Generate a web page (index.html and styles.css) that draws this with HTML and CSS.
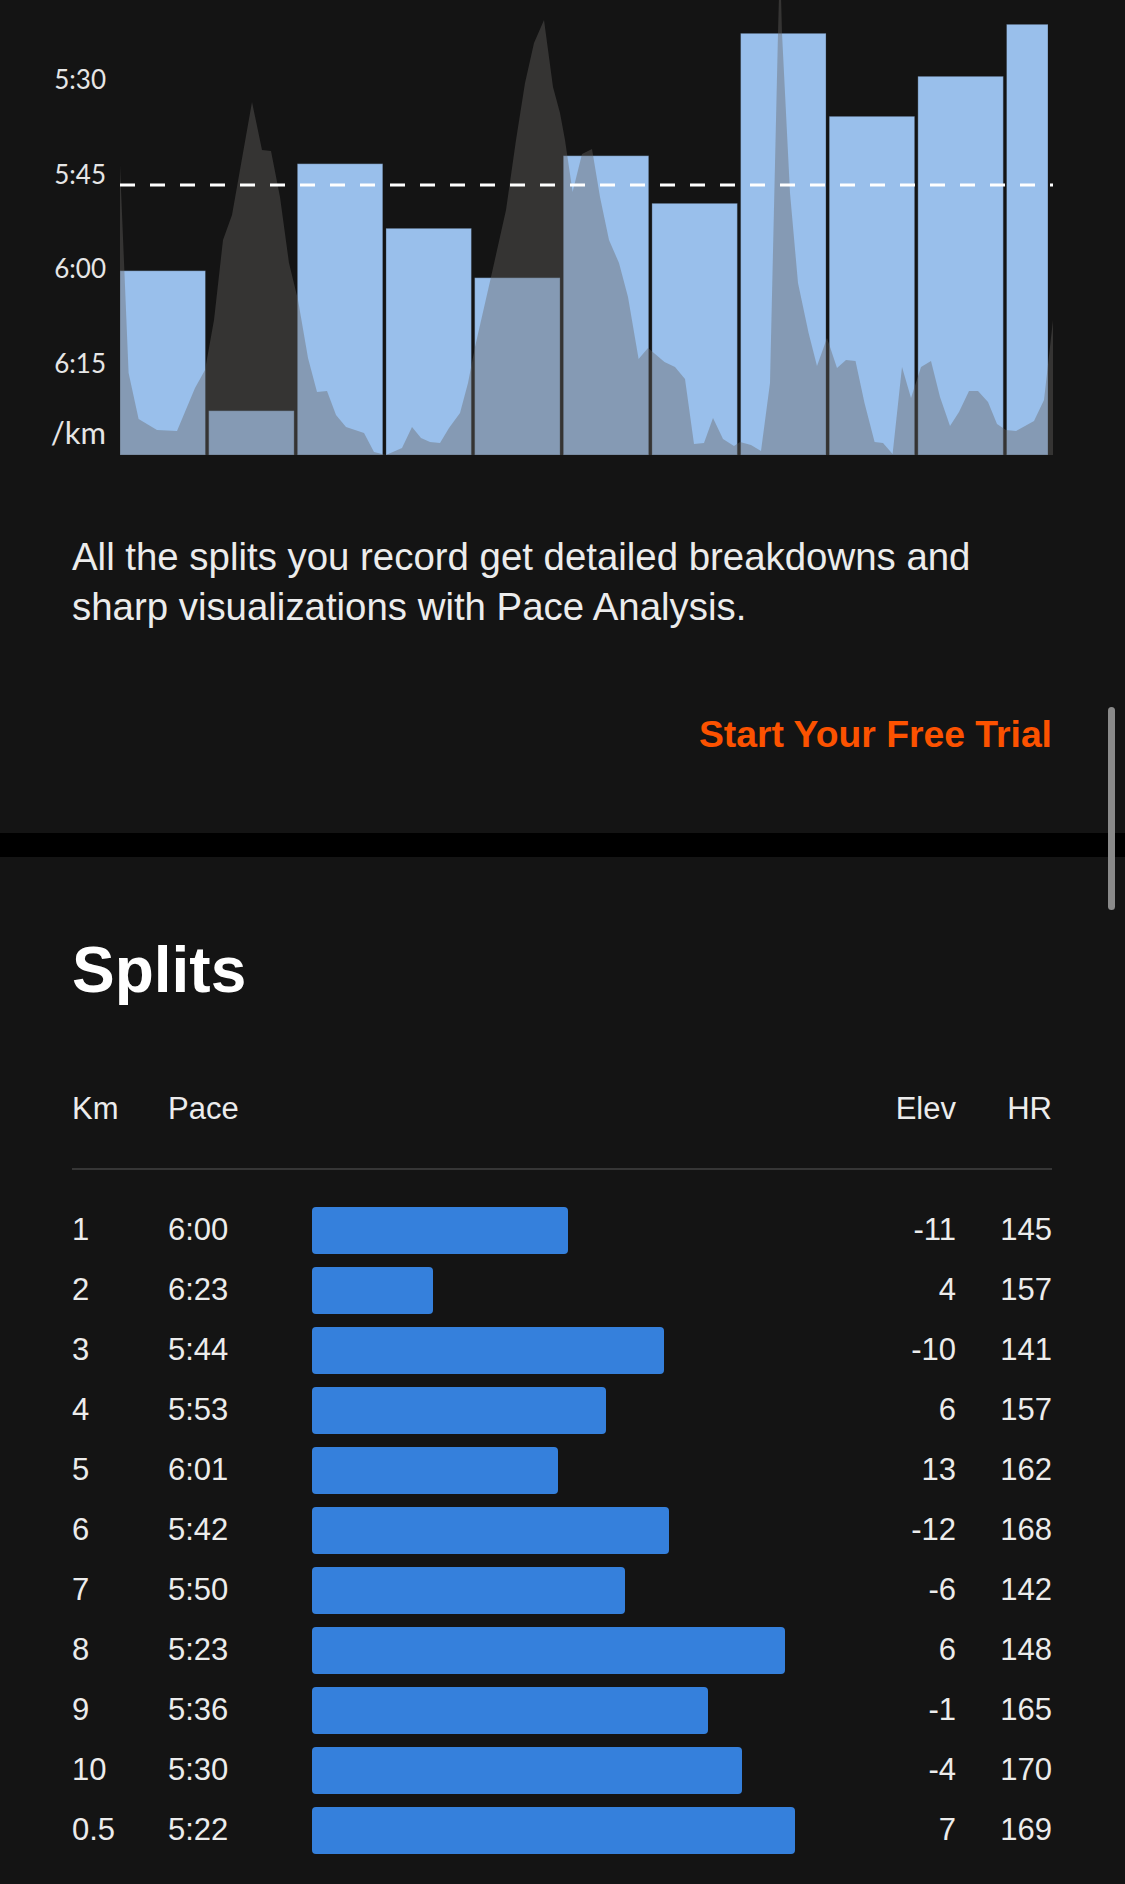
FILE: index.html
```html
<!DOCTYPE html>
<html lang="en">
<head>
    <meta charset="UTF-8">
    <meta name="viewport" content="width=device-width, initial-scale=1.0">
    <title>Pace Analysis</title>
    <link rel="stylesheet" href="styles.css">
</head>
<body>

    <section class="pace">
        <svg class="pace-chart" width="1060" height="460" viewBox="0 0 1060 460">
            <text class="axis-label" x="106" y="89">5:30</text>
            <text class="axis-label" x="106" y="184">5:45</text>
            <text class="axis-label" x="106" y="278">6:00</text>
            <text class="axis-label" x="106" y="373">6:15</text>
            <text class="axis-label axis-unit" x="106" y="444">/km</text>

            <!-- one bar per km, top = pace -->
            <g class="pace-bars">
                <rect x="120" y="270.7" width="85.5" height="184.3"/>
                <rect x="208.65" y="410.7" width="85.5" height="44.3"/>
                <rect x="297.3" y="163.7" width="85.5" height="291.3"/>
                <rect x="385.95" y="228.3" width="85.5" height="226.7"/>
                <rect x="474.6" y="277.7" width="85.5" height="177.3"/>
                <rect x="563.25" y="155.7" width="85.5" height="299.3"/>
                <rect x="651.9" y="203.3" width="85.5" height="251.7"/>
                <rect x="740.55" y="33.3" width="85.5" height="421.7"/>
                <rect x="829.2" y="116.3" width="85.5" height="338.7"/>
                <rect x="917.85" y="76.3" width="85.5" height="378.7"/>
                <rect x="1006.5" y="24.3" width="41.5" height="430.7"/>
            </g>

            <!-- elevation profile -->
            <polygon class="elevation" points="120,455 120,165 128.6,373 138.6,419 157,430 177,431 195,388 205,370 214,320 223,240 232,215 252,102 262,150 271,151 280,197 289,263 298,300 308,358 317,392 327,391 336,415 346,427 364,433 374,452 382,454 386,455 402,448 412,427 421,438 430,442 440,443 449,428 460,413 468,383 475,347 491,277 506,210 516,140 525,83 534,43 544,20 553,87 560,113 565,140 572.6,192 582,154 592,149 600,197 609,240 619,263 628,297 638.6,359 648,348 664.5,362 675,367 685,379 694,444 704,443 713,418 723,439 734,446 740,442 751,445 761,451 770,383 778,33 779,-5 781,-5 782,33 790,193 798,283 808.6,333 817,366 827,338 837,368 846,360 855.5,361 864.5,403 874.6,442 883,443 892.6,454 902,367 911,398 921,367 931,361 940,397 950,426 959,412 969,391 978,391 988,402 997,424 1006,430 1016,431 1034,421 1044,400 1053,320 1053,455"/>

            <!-- average pace -->
            <line class="avg-line" x1="120" y1="185" x2="1053" y2="185"/>
        </svg>

        <div class="pace-body">
            <p class="pace-copy">All the splits you record get detailed breakdowns and sharp visualizations with Pace Analysis.</p>
            <div class="cta-row">
                <a class="cta" href="#">Start Your Free Trial</a>
            </div>
        </div>
    </section>

    <div class="band"></div>

    <section class="splits">
        <h2 class="splits-title">Splits</h2>

        <div class="split-row split-head">
            <span>Km</span>
            <span>Pace</span>
            <span></span>
            <span class="num">Elev</span>
            <span class="num">HR</span>
        </div>

        <div class="split-list">
            <div class="split-row split">
                <span>1</span><span>6:00</span>
                <span><div class="bar" style="width: 256px"></div></span>
                <span class="num">-11</span><span class="num">145</span>
            </div>
            <div class="split-row split">
                <span>2</span><span>6:23</span>
                <span><div class="bar" style="width: 120.5px"></div></span>
                <span class="num">4</span><span class="num">157</span>
            </div>
            <div class="split-row split">
                <span>3</span><span>5:44</span>
                <span><div class="bar" style="width: 352px"></div></span>
                <span class="num">-10</span><span class="num">141</span>
            </div>
            <div class="split-row split">
                <span>4</span><span>5:53</span>
                <span><div class="bar" style="width: 294px"></div></span>
                <span class="num">6</span><span class="num">157</span>
            </div>
            <div class="split-row split">
                <span>5</span><span>6:01</span>
                <span><div class="bar" style="width: 245.5px"></div></span>
                <span class="num">13</span><span class="num">162</span>
            </div>
            <div class="split-row split">
                <span>6</span><span>5:42</span>
                <span><div class="bar" style="width: 356.5px"></div></span>
                <span class="num">-12</span><span class="num">168</span>
            </div>
            <div class="split-row split">
                <span>7</span><span>5:50</span>
                <span><div class="bar" style="width: 313px"></div></span>
                <span class="num">-6</span><span class="num">142</span>
            </div>
            <div class="split-row split">
                <span>8</span><span>5:23</span>
                <span><div class="bar" style="width: 473px"></div></span>
                <span class="num">6</span><span class="num">148</span>
            </div>
            <div class="split-row split">
                <span>9</span><span>5:36</span>
                <span><div class="bar" style="width: 395.5px"></div></span>
                <span class="num">-1</span><span class="num">165</span>
            </div>
            <div class="split-row split">
                <span>10</span><span>5:30</span>
                <span><div class="bar" style="width: 429.5px"></div></span>
                <span class="num">-4</span><span class="num">170</span>
            </div>
            <div class="split-row split">
                <span>0.5</span><span>5:22</span>
                <span><div class="bar" style="width: 483px"></div></span>
                <span class="num">7</span><span class="num">169</span>
            </div>
        </div>
    </section>

    <div class="scrollbar"></div>

</body>
</html>
```

FILE: styles.css
```css
* {
    box-sizing: border-box;
}
body {
    margin: 0;
    background: #141414;
    color: #ececec;
    font-family: "Liberation Sans", Arial, sans-serif;
}

/* pace analysis chart */
.pace {
    height: 833px;
}
.pace-chart {
    display: block;
}
.axis-label {
    font-family: Lato, "Liberation Sans", sans-serif;
    font-size: 26px;
    fill: #e6e6e6;
    text-anchor: end;
}
.axis-unit {
    font-size: 31px;
}
.pace-bars rect {
    fill: #99bfeb;
    stroke: rgba(20, 20, 20, 0.3);
    stroke-width: 1;
}
.elevation {
    fill: rgba(102, 100, 97, 0.4);
}
.avg-line {
    stroke: #ffffff;
    stroke-width: 3.2;
    stroke-dasharray: 15 15;
}
.pace-body {
    padding: 72px 73px 0 72px;
}
.pace-copy {
    margin: 0;
    font-size: 38.4px;
    line-height: 50px;
    color: #ececec;
}
.cta-row {
    display: flex;
    justify-content: flex-end;
    margin-top: 80px;
}
.cta {
    font-size: 37.3px;
    line-height: 44px;
    font-weight: bold;
    color: #fc5200;
    text-decoration: none;
}

.band {
    height: 24px;
    background: #000;
}

/* splits table */
.splits {
    padding: 77px 73px 0 72px;
}
.splits-title {
    margin: 0;
    font-size: 64px;
    line-height: 72px;
    font-weight: bold;
    color: #fff;
}
.split-row {
    display: grid;
    grid-template-columns: 96px 144px 1fr 100px 96px;
    align-items: center;
    font-size: 31px;
    color: #ececec;
}
.split-head {
    margin-top: 85px;
    line-height: 36px;
    padding-bottom: 41px;
    border-bottom: 2px solid #363636;
}
.split-list {
    padding-top: 30px;
}
.split {
    height: 60px;
}
.bar {
    height: 47px;
    background: #3580dc;
    border-radius: 4px;
}
.num {
    text-align: right;
}

.scrollbar {
    position: fixed;
    top: 707px;
    right: 10px;
    width: 7px;
    height: 203px;
    border-radius: 4px;
    background: #8a8a8a;
}
```
